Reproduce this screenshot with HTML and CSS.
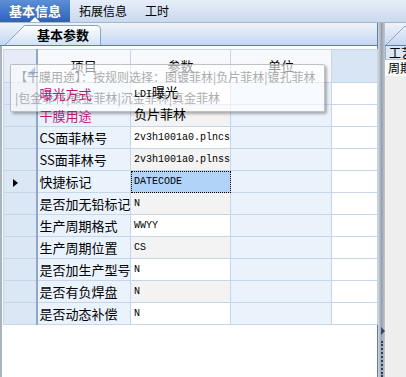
FILE: index.html
```html
<!DOCTYPE html>
<html lang="zh-CN">
<head>
    <meta charset="UTF-8">
    <title>基本信息</title>
    <link rel="stylesheet" href="styles.css">
</head>
<body>
    <div class="menubar">
        <div class="menu-tab active">基本信息</div>
        <div class="menu-tab">拓展信息</div>
        <div class="menu-tab">工时</div>
    </div>

    <div class="main">
        <div class="left">
            <div class="tabstrip">
                <div class="subtab">
                    <svg class="tab-shape" width="96" height="20" viewBox="0 0 96 20">
                        <defs>
                            <linearGradient id="tabg" x1="0" y1="0" x2="0" y2="1">
                                <stop offset="0" stop-color="#ffffff"/>
                                <stop offset="1" stop-color="#d3e2f5"/>
                            </linearGradient>
                        </defs>
                        <path d="M0 20 L19.5 0.5 H91 Q95.5 0.5 95.5 5 V20" fill="url(#tabg)" stroke="#8ca4c4"/>
                    </svg>
                    <span class="subtab-text">基本参数</span>
                </div>
            </div>

            <div class="grid-wrap">
                <table class="grid">
                    <colgroup>
                        <col class="c-head">
                        <col class="c-item">
                        <col class="c-param">
                        <col class="c-unit">
                        <col class="c-fill">
                    </colgroup>
                    <thead>
                        <tr>
                            <th class="corner"></th>
                            <th>项目</th>
                            <th>参数</th>
                            <th>单位</th>
                            <th class="fill"></th>
                        </tr>
                    </thead>
                    <tbody>
                        <tr>
                            <td class="rh"></td>
                            <td class="item pink"><span class="over">曝光方式</span></td>
                            <td class="param"><span class="over">LDI<span class="cn">曝光</span></span></td>
                            <td class="unit"></td>
                            <td class="fill"></td>
                        </tr>
                        <tr class="alt">
                            <td class="rh"></td>
                            <td class="item pink"><span class="over">干膜用途</span></td>
                            <td class="param"><span class="over cn">负片菲林</span></td>
                            <td class="unit"></td>
                            <td class="fill"></td>
                        </tr>
                        <tr>
                            <td class="rh"></td>
                            <td class="item">CS面菲林号</td>
                            <td class="param">2v3h1001a0.plncs</td>
                            <td class="unit"></td>
                            <td class="fill"></td>
                        </tr>
                        <tr class="alt">
                            <td class="rh"></td>
                            <td class="item">SS面菲林号</td>
                            <td class="param">2v3h1001a0.plnss</td>
                            <td class="unit"></td>
                            <td class="fill"></td>
                        </tr>
                        <tr>
                            <td class="rh current"><span class="arrow"></span></td>
                            <td class="item">快捷标记</td>
                            <td class="param selected">DATECODE</td>
                            <td class="unit"></td>
                            <td class="fill"></td>
                        </tr>
                        <tr class="alt">
                            <td class="rh"></td>
                            <td class="item">是否加无铅标记</td>
                            <td class="param">N</td>
                            <td class="unit"></td>
                            <td class="fill"></td>
                        </tr>
                        <tr>
                            <td class="rh"></td>
                            <td class="item">生产周期格式</td>
                            <td class="param">WWYY</td>
                            <td class="unit"></td>
                            <td class="fill"></td>
                        </tr>
                        <tr class="alt">
                            <td class="rh"></td>
                            <td class="item">生产周期位置</td>
                            <td class="param">CS</td>
                            <td class="unit"></td>
                            <td class="fill"></td>
                        </tr>
                        <tr>
                            <td class="rh"></td>
                            <td class="item">是否加生产型号</td>
                            <td class="param">N</td>
                            <td class="unit"></td>
                            <td class="fill"></td>
                        </tr>
                        <tr class="alt">
                            <td class="rh"></td>
                            <td class="item">是否有负焊盘</td>
                            <td class="param">N</td>
                            <td class="unit"></td>
                            <td class="fill"></td>
                        </tr>
                        <tr>
                            <td class="rh"></td>
                            <td class="item">是否动态补偿</td>
                            <td class="param">N</td>
                            <td class="unit"></td>
                            <td class="fill"></td>
                        </tr>
                    </tbody>
                </table>
            </div>

            <div class="tooltip">
                <div>【干膜用途】：按规则选择：图镀菲林|负片菲林|镀孔菲林</div>
                <div>|包金菲林|镀金菲林|沉金菲林|真金菲林</div>
            </div>
        </div>

        <div class="splitter">
            <span class="split-arrow"></span>
            <span class="split-dots"></span>
        </div>

        <div class="right">
            <div class="rtabstrip">
                <svg class="rtab-shape" width="21" height="20" viewBox="0 0 21 20">
                    <path d="M1 20 L19.5 1.5 H21" fill="#eef4fc" stroke="#8ca4c4"/>
                </svg>
            </div>
            <div class="rhead">工艺</div>
            <div class="rrow">周期</div>
        </div>
    </div>
</body>
</html>
```

FILE: styles.css
```css
body {
    margin: 0;
    width: 406px;
    height: 377px;
    overflow: hidden;
    font-family: "Noto Sans CJK SC", sans-serif;
    font-size: 13px;
    color: #000;
    background: #fff;
}

.menubar {
    height: 22px;
    display: flex;
    background: linear-gradient(#e6eef9, #cad9ef);
    border-bottom: 1px solid #a8b6c9;
}
.menu-tab {
    padding: 0 9px;
    font-size: 12px;
    line-height: 22px;
}
.menu-tab.active {
    position: relative;
    width: 70px;
    padding: 0;
    box-sizing: border-box;
    text-align: center;
    font-size: 13px;
    font-weight: bold;
    color: #fff;
    background: linear-gradient(#5c8fd7, #2f62b2);
}
.menu-tab.active::after {
    content: "";
    position: absolute;
    left: 30px;
    bottom: 0;
    border-left: 5px solid transparent;
    border-right: 5px solid transparent;
    border-bottom: 5px solid #fff;
}

.main {
    display: flex;
    height: 354px;
}

.left {
    position: relative;
    width: 377px;
    border-right: 1px solid #5d7fae;
    background: #fff;
}

.tabstrip {
    height: 22px;
    display: flex;
    align-items: flex-end;
    padding-left: 5px;
    background: linear-gradient(#eef3fb, #c5d7ef);
    border-bottom: 1px solid #5b7db0;
}
.subtab {
    position: relative;
    width: 96px;
    height: 20px;
}
.tab-shape {
    position: absolute;
    left: 0;
    top: 0;
}
.subtab-text {
    position: relative;
    display: block;
    padding-left: 32px;
    font-size: 13px;
    font-weight: bold;
    line-height: 20px;
}

.grid-wrap {
    height: 331px;
    padding-top: 3px;
    border-left: 2px solid #a9b2bf;
    padding-left: 1px;
    background: #fff;
}

.grid {
    border-collapse: collapse;
    table-layout: fixed;
    width: 374px;
}
.c-head { width: 33px; }
.c-item { width: 94px; }
.c-param { width: 100px; }
.c-unit { width: 101px; }
.c-fill { width: 46px; }

.grid thead tr {
    height: 33px;
}
.grid th {
    padding: 0;
    font-weight: normal;
    font-size: 13px;
    line-height: 16px;
    background: #f7f9fc;
    border: 1px solid #c8d5e6;
}
.grid th.corner {
    position: relative;
    background: #e4ecf8;
    border-right: 2px solid #8ea7c8;
}
.grid th.corner::after {
    content: "";
    position: absolute;
    right: 1px;
    bottom: 7px;
    border-left: 8px solid transparent;
    border-bottom: 8px solid #4470c0;
}
.grid th.fill {
    background: #d8e5f5;
}

.grid tbody tr {
    height: 22px;
}
.grid td {
    padding: 0 2px;
    border: 1px solid #c6d6ea;
    white-space: nowrap;
    overflow: hidden;
    line-height: 16px;
}
.grid td.rh {
    background: #dce7f5;
    border-right: 2px solid #8ea7c8;
}
.grid td.item {
    background: #eaf2fc;
}
.grid td.pink {
    color: #c4147c;
}
.grid td.param {
    padding-left: 3px;
    font-family: "Liberation Mono", "Noto Sans CJK SC", monospace;
    font-size: 10px;
    background: #fff;
}
.grid tr.alt td.param {
    background: #f3f3f3;
}
.grid td.param .cn {
    font-family: "Noto Sans CJK SC", sans-serif;
    font-size: 13px;
}
.grid td.param.selected {
    background: #b1d3f8;
    outline: 1px dotted #000;
    outline-offset: -1px;
}
.grid td.unit {
    background: #eaf2fc;
}
.grid td.fill {
    background: #fff;
}
.grid .over {
    position: relative;
    z-index: 2;
}
.arrow {
    display: inline-block;
    margin-left: 7px;
    border-left: 5px solid #000;
    border-top: 4px solid transparent;
    border-bottom: 4px solid transparent;
    vertical-align: middle;
}

.tooltip {
    position: absolute;
    z-index: 1;
    left: 10px;
    top: 41px;
    width: 305px;
    height: 44px;
    padding: 1px 4px;
    font-size: 12px;
    line-height: 21px;
    color: #8a8a8a;
    white-space: nowrap;
    background: rgba(255, 255, 255, 0.6);
    border: 1px solid rgba(120, 120, 120, 0.45);
    border-radius: 2px;
    box-shadow: 2px 2px 3px rgba(0, 0, 0, 0.3);
}
.tooltip div {
    opacity: 0.7;
}

.splitter {
    width: 7px;
    display: flex;
    flex-direction: column;
    align-items: center;
    padding-top: 304px;
    box-sizing: border-box;
    background: linear-gradient(to right, #d3d8de, #98a2ae 50%, #c1c8d0);
}
.split-arrow {
    width: 0;
    height: 0;
    margin-left: 2px;
    border-left: 4px solid #34486a;
    border-top: 4px solid transparent;
    border-bottom: 4px solid transparent;
}
.split-dots {
    flex: 1;
    margin-top: 6px;
    border-left: 2px dotted #2d3e5c;
}

.right {
    flex: 1;
    background: #eeeeee;
    overflow: hidden;
}
.rtabstrip {
    height: 22px;
    display: flex;
    align-items: flex-end;
    background: linear-gradient(#eef3fb, #c5d7ef);
    border-bottom: 1px solid #5b7db0;
}
.rhead {
    height: 13px;
    padding-left: 3px;
    font-size: 12px;
    line-height: 13px;
    background: #dbe7f6;
    border-left: 1px solid #9fb3cf;
    border-bottom: 1px solid #b5c6dd;
    white-space: nowrap;
}
.rrow {
    height: 16px;
    padding-left: 3px;
    font-size: 12px;
    line-height: 16px;
    background: #fbfbfb;
    white-space: nowrap;
}
```
